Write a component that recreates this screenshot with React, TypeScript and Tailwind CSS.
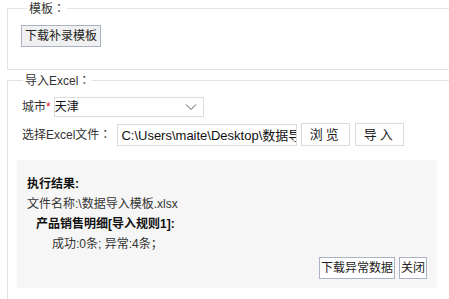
import React from 'react';

const font = { fontFamily: '"Liberation Sans", "Noto Sans CJK SC", sans-serif' };

const Btn: React.FC<{ children: React.ReactNode; className?: string }> = ({ children, className = '' }) => (
  <button
    className={`h-[22px] whitespace-nowrap border border-[#a9b3c4] bg-[#f0f0f0] text-[12px] leading-[20px] text-[#222] ${className}`}
  >
    {children}
  </button>
);

// full-width colon, centered like the reference
const Colon = () => <span style={{ fontFamily: '"Noto Sans CJK TC", sans-serif' }}>：</span>;

export default function App() {
  return (
    <div className="h-[299px] w-[449px] overflow-hidden bg-white text-[12px] text-[#333]" style={font}>
      <fieldset className="ml-[7px] h-[70px] w-[460px] border border-[#e3e3e3] pl-[13px]">
        <legend className="ml-[6px] px-[2px] leading-[16px]">
          模板<Colon />
        </legend>
        <div className="pt-[8px]">
          <Btn className="w-[80px] bg-[#ece9e6] px-[3px]">下载补录模板</Btn>
        </div>
      </fieldset>

      <fieldset className="ml-[7px] mt-[2px] h-[230px] w-[460px] border border-b-0 border-[#e3e3e3] pl-[9px]">
        <legend className="ml-[6px] px-[2px] leading-[16px]">
          导入Excel<Colon />
        </legend>

        <div className="flex items-center pl-[5px] pt-[8px]">
          <span>城市</span>
          <span className="text-[#e02020]">*</span>
          <div className="ml-[3px] flex h-[20px] w-[150px] items-center justify-between border border-[#dcdcdc] pr-[6px] text-[#111]">
            <span>天津</span>
            <svg width="12" height="8" viewBox="0 0 12 8" fill="none" stroke="#555" strokeWidth="1">
              <polyline points="1,1.5 6,6.5 11,1.5" />
            </svg>
          </div>
        </div>

        <div className="flex items-center pl-[5px] pt-[6px]">
          <span className="whitespace-nowrap">
            选择Excel文件<Colon />
          </span>
          <input
            readOnly
            value="C:\Users\maite\Desktop\数据导入模板.xlsx"
            className="ml-[6px] h-[22px] w-[180px] shrink-0 border border-[#dcdcdc] pl-[3px] text-[13px] text-[#111] outline-none"
            style={font}
          />
          <button className="ml-[4px] h-[23px] w-[49px] shrink-0 whitespace-nowrap border border-[#dcdcdc] bg-white text-[13px] tracking-[3px] text-[#222]">浏览</button>
          <button className="ml-[5px] h-[23px] w-[49px] shrink-0 whitespace-nowrap border border-[#dcdcdc] bg-white text-[13px] tracking-[3px] text-[#222]">导入</button>
        </div>

        <div className="mt-[14px] flex h-[128px] w-[420px] flex-col bg-[#f6f6f6] pl-[10px] pt-[14px]">
          <div className="font-bold leading-[20px] text-[#111]">执行结果:</div>
          <div className="leading-[20px]">文件名称:\数据导入模板.xlsx</div>
          <div className="pl-[9px] font-bold leading-[20px] text-[#111]">产品销售明细[导入规则1]:</div>
          <div className="pl-[25px] leading-[20px]">成功:0条; 异常:4条；</div>
          <div className="mt-auto flex justify-end gap-[4px] pb-[9px] pr-[10px]">
            <Btn className="bg-white px-[1px]">下载异常数据</Btn>
            <Btn className="bg-white px-[1px]">关闭</Btn>
          </div>
        </div>
      </fieldset>
    </div>
  );
}
